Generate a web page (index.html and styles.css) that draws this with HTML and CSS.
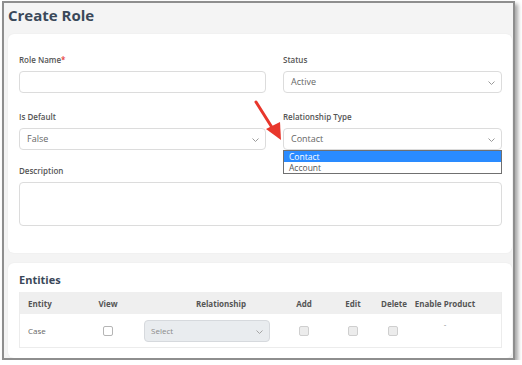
FILE: index.html
```html
<!DOCTYPE html>
<html lang="en">
<head>
  <meta charset="UTF-8">
  <title>Create Role</title>
  <link rel="stylesheet" href="styles.css">
</head>
<body>
  <div class="frame">
    <h1 class="page-title">Create Role</h1>

    <div class="card role-card">
      <div class="form-grid">
        <div class="field">
          <label>Role Name<span class="req">*</span></label>
          <div class="control"></div>
        </div>
        <div class="field">
          <label>Status</label>
          <div class="control select">Active
            <svg class="chev" width="7" height="4" viewBox="0 0 7 4"><path d="M0.5 0.5 L3.5 3.5 L6.5 0.5" fill="none" stroke="#9a9a9a" stroke-width="1"/></svg>
          </div>
        </div>
        <div class="field">
          <label>Is Default</label>
          <div class="control select">False
            <svg class="chev" width="7" height="4" viewBox="0 0 7 4"><path d="M0.5 0.5 L3.5 3.5 L6.5 0.5" fill="none" stroke="#9a9a9a" stroke-width="1"/></svg>
          </div>
        </div>
        <div class="field has-menu">
          <label>Relationship Type</label>
          <div class="control select">Contact
            <svg class="chev" width="7" height="4" viewBox="0 0 7 4"><path d="M0.5 0.5 L3.5 3.5 L6.5 0.5" fill="none" stroke="#9a9a9a" stroke-width="1"/></svg>
          </div>
          <ul class="menu">
            <li class="active">Contact</li>
            <li>Account</li>
          </ul>
        </div>
        <div class="field wide">
          <label>Description</label>
          <div class="control textarea"></div>
        </div>
      </div>

      <svg class="arrow" width="34" height="44" viewBox="0 0 34 44">
        <line x1="3" y1="2" x2="20" y2="29" stroke="#e8372c" stroke-width="3" stroke-linecap="round"/>
        <polygon points="13,29 27,22 28,40" fill="#e8372c"/>
      </svg>
    </div>

    <div class="card entities-card">
      <h2 class="card-title">Entities</h2>
      <div class="table">
        <div class="row head">
          <div class="cell left">Entity</div>
          <div class="cell">View</div>
          <div class="cell shift">Relationship</div>
          <div class="cell">Add</div>
          <div class="cell">Edit</div>
          <div class="cell">Delete</div>
          <div class="cell">Enable Product</div>
          <div class="cell"></div>
        </div>
        <div class="row body">
          <div class="cell left">Case</div>
          <div class="cell"><span class="check"></span></div>
          <div class="cell select-cell">
            <div class="mini-select">Select
              <svg class="chev" width="7" height="4" viewBox="0 0 7 4"><path d="M0.5 0.5 L3.5 3.5 L6.5 0.5" fill="none" stroke="#a5a5a5" stroke-width="1"/></svg>
            </div>
          </div>
          <div class="cell"><span class="check off"></span></div>
          <div class="cell"><span class="check off"></span></div>
          <div class="cell"><span class="check off"></span></div>
          <div class="cell dash">-</div>
          <div class="cell"></div>
        </div>
      </div>
    </div>
  </div>
</body>
</html>
```

FILE: styles.css
```css
body {
  margin: 0;
  background-color: #ffffff;
  font-family: "Open Sans", "Noto Sans", sans-serif;
}

.frame {
  box-sizing: border-box;
  width: 513px;
  height: 359px;
  margin: 1px 0 0 2px;
  padding: 2px 1px 0 4px;
  border: 2px solid #8e8e8e;
  background-color: #f4f4f4;
  box-shadow: 3px 3px 4px rgba(0, 0, 0, 0.35);
  overflow: hidden;
}

.page-title {
  margin: 0 0 9px;
  font-size: 15px;
  line-height: 20px;
  font-weight: 700;
  color: #3a4859;
}

.card {
  position: relative;
  background-color: #ffffff;
  border-radius: 6px;
  box-shadow: 0 0 2px rgba(0, 0, 0, 0.06);
  width: 504px;
  box-sizing: border-box;
}

.role-card {
  padding: 20px 10px 27px 11px;
}

.form-grid {
  display: grid;
  grid-template-columns: 247px 1fr;
  column-gap: 17px;
  row-gap: 18px;
}

.field {
  position: relative;
}

.field.wide {
  grid-column: 1 / 3;
  margin-top: -3px;
}

.field label {
  display: block;
  font-size: 8px;
  line-height: 11px;
  font-weight: 600;
  color: #555555;
  margin-bottom: 6px;
}

.req {
  color: #e53935;
}

.control {
  position: relative;
  box-sizing: border-box;
  height: 22px;
  border: 1px solid #dcdcdc;
  border-radius: 4px;
  background-color: #ffffff;
  padding-left: 7px;
  font-size: 9px;
  line-height: 20px;
  color: #666666;
}

.control.textarea {
  height: 44px;
}

.chev {
  position: absolute;
  right: 6px;
  top: 9px;
}

.menu {
  position: absolute;
  left: 0;
  right: 0;
  top: 39px;
  margin: 0;
  padding: 0;
  list-style: none;
  background-color: #ffffff;
  border: 1px solid #707070;
  font-size: 8.5px;
  line-height: 11px;
  color: #555555;
  z-index: 2;
}

.menu li {
  height: 11px;
  padding-left: 5px;
  overflow: hidden;
}

.menu li.active {
  background-color: #2a8bff;
  color: #ffffff;
}

.arrow {
  position: absolute;
  left: 245px;
  top: 66px;
}

.entities-card {
  margin-top: 10px;
  padding: 9px 10px 10px 11px;
  height: 95px;
}

.card-title {
  margin: 0 0 5px;
  font-size: 11px;
  line-height: 15px;
  font-weight: 700;
  color: #3a4859;
}

.table {
  border: 1px solid #ececec;
  border-top: none;
}

.row {
  display: grid;
  grid-template-columns: 56px 64px 143px 42px 56px 24px 80px 1fr;
  align-items: center;
}

.row.head {
  height: 22px;
  background-color: #efefef;
  font-size: 8px;
  font-weight: 700;
  color: #555555;
}

.row.body {
  height: 33px;
  font-size: 8px;
  color: #666666;
}

.cell {
  text-align: center;
}

.cell.left {
  text-align: left;
  padding-left: 8px;
}

.cell.shift {
  padding-left: 19px;
}

.cell.select-cell {
  text-align: left;
  padding-left: 4px;
}

.mini-select {
  position: relative;
  box-sizing: border-box;
  width: 126px;
  height: 22px;
  border: 1px solid #d6d9dd;
  border-radius: 4px;
  background-color: #e9ecef;
  padding-left: 6px;
  font-size: 8px;
  line-height: 20px;
  color: #8a8a8a;
}

.check {
  display: inline-block;
  width: 8px;
  height: 8px;
  border: 1px solid #b5b5b5;
  border-radius: 2px;
  background-color: #ffffff;
  vertical-align: middle;
}

.check.off {
  background-color: #ececec;
  border-color: #cfcfcf;
}

.cell.dash {
  align-self: start;
  padding-top: 4px;
  color: #888888;
}
```
